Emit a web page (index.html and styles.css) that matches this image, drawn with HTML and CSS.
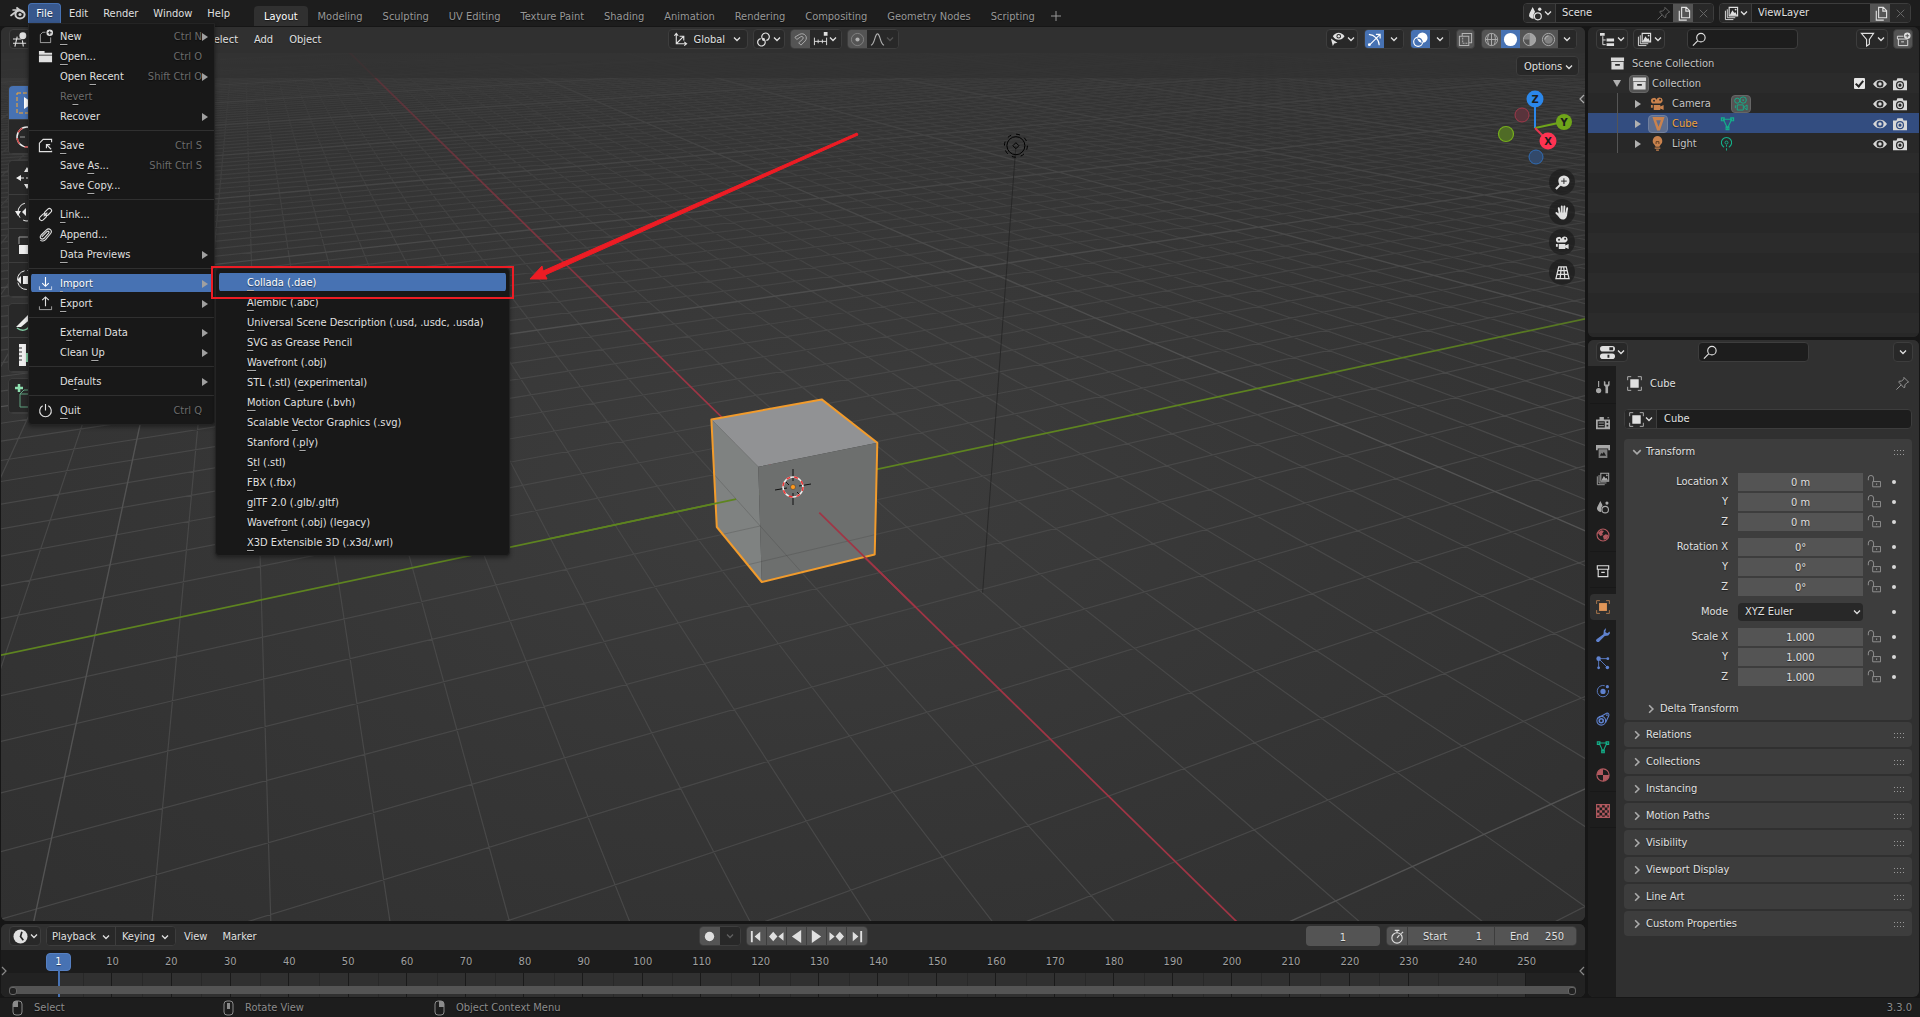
FILE: index.html
```html
<!DOCTYPE html>
<html lang="en">
<head>
<meta charset="utf-8">
<title>Blender</title>
<link rel="stylesheet" href="styles.css">
</head>
<body>
<svg class="sprite" aria-hidden="true">
  <defs>
    <symbol id="chev" viewBox="0 0 8 8"><path d="M1 2.5 4 5.5 7 2.5" fill="none" stroke="currentColor" stroke-width="1.3"/></symbol>
    <symbol id="blender" viewBox="0 0 16 16"><path d="M1 10.5 8 5H3M8.500 5 6.500 2.500 13 7.500M3 5h6" fill="none" stroke="currentColor" stroke-width="1.600" stroke-linecap="round"/><ellipse cx="10" cy="9.500" rx="4.600" ry="4" fill="none" stroke="currentColor" stroke-width="2"/><circle cx="10" cy="9.500" r="1.600" fill="currentColor"/></symbol>
    <symbol id="newfile" viewBox="0 0 16 16"><path d="M8 3.500H5L2.500 6v8.500h11V9" fill="none" stroke="currentColor" opacity=".7"/><circle cx="12.500" cy="4" r="3.500" fill="currentColor"/><path d="M12.500 2v4M10.500 4h4" stroke="#181818"/></symbol>
    <symbol id="folder" viewBox="0 0 16 16"><path d="M1 2h6v2h8v2H1zM1 7h14v7H1z" fill="currentColor"/></symbol>
    <symbol id="save" viewBox="0 0 16 16"><path d="M14.500 4.500v-3h-9l-4 4v9h13v-1M14 12 9 7M9 11V7h4" fill="none" stroke="currentColor" stroke-width="1.200"/></symbol>
    <symbol id="link" viewBox="0 0 16 16"><g fill="none" stroke="currentColor" stroke-width="1.200"><rect x="6.500" y="3" width="8.500" height="4.600" rx="2.300" transform="rotate(-45 10.700 5.300)"/><rect x="1" y="8.500" width="8.500" height="4.600" rx="2.300" transform="rotate(-45 5.300 10.700)"/><path d="m6 10 4-4"/></g></symbol>
    <symbol id="clip" viewBox="0 0 16 16"><path d="M4 10.500 9.500 5c1.500-1.300 3 .2 1.700 1.700L6.500 12c-2.500 2.300-5.500-.5-3.300-3.200L9 3c3-2.700 7 1 4.300 4.200L8 13.500c-1.500 1.600-4 1.800-5.500.5" fill="none" stroke="currentColor" stroke-width="1.200"/></symbol>
    <symbol id="import" viewBox="0 0 16 16"><path d="M8 1v10M4.500 7.500 8 11l3.500-3.500" fill="none" stroke="currentColor" stroke-width="1.200"/><path d="M1.500 11v3.500h13V11" fill="none" stroke="currentColor" opacity=".7"/></symbol>
    <symbol id="export" viewBox="0 0 16 16"><path d="M8 11V1M4.500 4.500 8 1l3.500 3.500" fill="none" stroke="currentColor" stroke-width="1.200"/><path d="M1.500 11v3.500h13V11" fill="none" stroke="currentColor" opacity=".7"/></symbol>
    <symbol id="power" viewBox="0 0 16 16"><path d="M5 3a6.200 6.200 0 1 0 6 0M8 1v7" fill="none" stroke="currentColor" stroke-width="1.200"/></symbol>
    <symbol id="scene" viewBox="0 0 16 16"><path d="M5 1 1.500 8a4 4 0 0 0 4.500 5.500V9l1.500-3z" fill="currentColor"/><circle cx="10.500" cy="11" r="3.700" fill="none" stroke="currentColor" stroke-width="1.300"/><circle cx="12.500" cy="3.500" r="1.800" fill="currentColor"/></symbol>
    <symbol id="pin" viewBox="0 0 16 16"><path d="M9.500 1.500 14.500 6.500l-1.500.5-2.500 2.500v2.500l-1 .5L4 6.500l.5-1H7l2.500-2.500zM6.500 9.500 1.500 14.500" fill="none" stroke="currentColor"/></symbol>
    <symbol id="copy" viewBox="0 0 16 16"><path d="M6 1.500h5L14.500 5v7.500H6zM10.500 1.500v4h4M3.500 5v10h8" fill="none" stroke="currentColor" stroke-width="1.200"/></symbol>
    <symbol id="close" viewBox="0 0 16 16"><path d="m4 4 8 8M12 4l-8 8" stroke="currentColor"/></symbol>
    <symbol id="layers" viewBox="0 0 16 16"><path d="M1.500 5v9.500H10M3.500 3.500V12.500H12" fill="none" stroke="currentColor"/><path d="M5.500 1.500h9v9h-9z" fill="none" stroke="currentColor" stroke-width="1.200"/><path d="M6 10 9 4.500l2 3 1-1L14 10z" fill="currentColor"/><circle cx="12.400" cy="3.800" r="1" fill="currentColor"/></symbol>
    <symbol id="tree" viewBox="0 0 16 16"><path d="M0 1h5v3H0zM7 7h8v3H7zM7 12h8v3H7z" fill="currentColor"/><path d="M3 4.500v9h3M3 8.500h3" fill="none" stroke="currentColor"/></symbol>
    <symbol id="search" viewBox="0 0 16 16"><circle cx="9.500" cy="6" r="4.500" fill="none" stroke="currentColor" stroke-width="1.200"/><path d="M6 9.500 1 14.500" stroke="currentColor" stroke-width="1.300"/></symbol>
    <symbol id="filter" viewBox="0 0 16 16"><path d="M1.500 1.500h13L10 8v5l-3 2V8z" fill="none" stroke="currentColor" stroke-width="1.200"/></symbol>
    <symbol id="newcol" viewBox="0 0 16 16"><path d="M8 4.500H1.500v3h11M2.500 7.500v7h10v-6M5.500 10.500h3" fill="none" stroke="currentColor"/><circle cx="12" cy="4" r="3.500" fill="currentColor"/><path d="M12 2v4M10 4h4" stroke="#545454"/></symbol>
    <symbol id="collection" viewBox="0 0 16 16"><path d="M1 1.500h14v4H1zM1.500 6.500h13v8h-13z" fill="currentColor"/><path d="M5.500 8.500h5v2h-5z" fill="#2a2a2a"/></symbol>
    <symbol id="box" viewBox="0 0 16 16"><path d="M1.500 2h13v4h-13zM2.500 6v8.500h11V6M6 9.500h4" fill="none" stroke="currentColor" stroke-width="1.300"/></symbol>
    <symbol id="moviecam" viewBox="0 0 16 16"><path fill-rule="evenodd" d="M4 2a3 3 0 1 0 0 6h7a3.300 3.300 0 1 0-4-4A3 3 0 0 0 4 2zm.300 2a1 1 0 1 1 0 2 1 1 0 0 1 0-2zm6.500-1a1 1 0 1 1 0 2 1 1 0 0 1 0-2zM4 9.500h7v1.800l3.500-1.800v5.500L11 13.200V15H4zM1 9.500h2v3H1z" fill="currentColor"/></symbol>
    <symbol id="moviecamo" viewBox="0 0 16 16"><circle cx="4.500" cy="5" r="2.700" fill="none" stroke="currentColor"/><circle cx="10.800" cy="4.300" r="3.400" fill="none" stroke="currentColor"/><circle cx="10.800" cy="4.300" r=".9" fill="currentColor"/><path d="M4.500 9.500h6.500v5.500H4.500zM11.500 12l3.500-2.500v5.500zM2.500 10v3" fill="none" stroke="currentColor"/></symbol>
    <symbol id="mesh" viewBox="0 0 16 16"><path d="M3.500 3.500h9L8 13zM1.500 2h3v3h-3zM11.500 2h3v3h-3zM6.500 11.500h3v3h-3z" fill="none" stroke="currentColor" stroke-width="1.200"/></symbol>
    <symbol id="tri" viewBox="0 0 16 16"><path fill-rule="evenodd" d="M1.500 1h13L9.500 15.500h-3zM5.500 4.500l2.500 7 2.500-7z" fill="currentColor"/></symbol>
    <symbol id="bulb" viewBox="0 0 16 16"><path d="M8 0a5.300 5.300 0 0 0-3 9.500L6 11.500h4l1-2A5.300 5.300 0 0 0 8 0z" fill="currentColor"/><path d="M6.500 8.500V6h3v2.500" fill="none" stroke="#5a3a20"/><path d="M5 13h6M6.500 15h3" stroke="currentColor" stroke-width="1.300"/></symbol>
    <symbol id="lightdata" viewBox="0 0 16 16"><path d="M5.500 12a5.500 5.500 0 1 1 5 0" fill="none" stroke="currentColor" stroke-width="1.200"/><circle cx="8" cy="7" r="1.600" fill="none" stroke="currentColor"/><path d="M8 9.500v2M8 13v2.500" stroke="currentColor"/></symbol>
    <symbol id="eye" viewBox="0 0 16 16"><path fill-rule="evenodd" d="M0 8c4-6.500 12-6.500 16 0-4 6.500-12 6.500-16 0zm8-4a4 4 0 1 0 0 8 4 4 0 0 0 0-8z" fill="currentColor"/><circle cx="8" cy="8" r="2" fill="currentColor"/></symbol>
    <symbol id="photo" viewBox="0 0 16 16"><path fill-rule="evenodd" d="M0 4h4l1-2.500h6L12 4h4v11H0zm8 .7a4.600 4.600 0 1 0 0 9.200 4.600 4.600 0 0 0 0-9.200z" fill="currentColor"/><circle cx="8" cy="9.300" r="2.500" fill="none" stroke="currentColor" stroke-width="1.400"/></symbol>
    <symbol id="axes" viewBox="0 0 16 16"><path d="M3.500 13V2M1.500 4l2-2.500L5.500 4M3 12.500h11M12 10.500l2.500 2-2.500 2M4 12 11 5M7 4.500h4.500V9" fill="none" stroke="currentColor" stroke-width="1.200"/></symbol>
    <symbol id="pivot" viewBox="0 0 16 16"><g fill="none" stroke="currentColor" stroke-width="1.300"><path d="M7 7.500A4 4 0 1 1 11 9"/><path d="M9 8.500A4 4 0 1 1 5 7"/></g><circle cx="8" cy="8" r="1.500" fill="currentColor"/></symbol>
    <symbol id="magnet" viewBox="0 0 16 16"><path d="M2 5.500 7 2.500c5-2.500 9.500 3 6 7L8.500 14 6 11.500l4.500-4c1.200-1.700-.5-3.500-2.200-2.500L4 8z" fill="none" stroke="currentColor"/></symbol>
    <symbol id="increments" viewBox="0 0 16 16"><path d="M1.500 6v8M14.500 6v8M5.500 8v4M10 8v4M1.500 10h13" stroke="currentColor"/><path d="M11.500 0h4v4h-4z" fill="currentColor"/></symbol>
    <symbol id="prop" viewBox="0 0 16 16"><circle cx="8" cy="8" r="6.500" fill="none" stroke="currentColor" opacity=".5"/><circle cx="8" cy="8" r="2.200" fill="currentColor"/></symbol>
    <symbol id="falloff" viewBox="0 0 16 16"><path d="M1 14c4 0 4-12 7-12s3 12 7 12" fill="none" stroke="currentColor" stroke-width="1.200"/></symbol>
    <symbol id="seltypes" viewBox="0 0 16 16"><path fill-rule="evenodd" d="M3 4.500c3-5 9.500-5 12.500 0-3 5-9.500 5-12.500 0zM9.300 2a2.500 2.500 0 1 0 0 5 2.500 2.500 0 0 0 0-5z" fill="currentColor"/><circle cx="9.300" cy="4.500" r="1.300" fill="currentColor"/><path d="m1 7 7 4.500-3.500.7L3 15z" fill="currentColor"/></symbol>
    <symbol id="gizmo" viewBox="0 0 16 16"><path d="M2 2.500C8 3 13 8 13 14M2 14.500 14 2.500M9.500 2.500H14V7" fill="none" stroke="currentColor" stroke-width="1.200"/><circle cx="2.500" cy="13.500" r="1.500" fill="currentColor"/></symbol>
    <symbol id="overlay" viewBox="0 0 16 16"><circle cx="10" cy="6" r="5.500" fill="currentColor"/><circle cx="5.500" cy="10.500" r="4.800" fill="none" stroke="currentColor" stroke-width="1.200"/><path d="M5 6.500A5 5 0 0 1 9.800 11" fill="none" stroke="#4772b3" stroke-width="1.400"/></symbol>
    <symbol id="xray" viewBox="0 0 16 16"><path d="M1.500 4.500h10v10h-10zM4.500 4V1.500h10v10H12" fill="none" stroke="currentColor" stroke-width="1.100"/><path d="M5 6v6h5" fill="none" stroke="currentColor" stroke-dasharray="2 1"/></symbol>
    <symbol id="wire" viewBox="0 0 16 16"><g fill="none" stroke="currentColor"><circle cx="8" cy="8" r="6.500"/><path d="M8 1.500v13M1.500 8h13M5 2.500c-2 4-1 8 0 11M11 2.500c2 4 1 8 0 11"/></g></symbol>
    <symbol id="solid" viewBox="0 0 16 16"><circle cx="8" cy="8" r="7" fill="currentColor"/></symbol>
    <symbol id="matprev" viewBox="0 0 16 16"><circle cx="8" cy="8" r="6.500" fill="none" stroke="currentColor"/><path d="M8 8V1.500A6.500 6.500 0 0 0 1.500 8z" fill="currentColor" opacity=".5"/><path d="M8 8h6.500A6.500 6.500 0 0 0 8 1.500zM8 8h6.500A6.500 6.500 0 0 1 8 14.500z" fill="currentColor" opacity=".85"/></symbol>
    <symbol id="rendered" viewBox="0 0 16 16"><circle cx="8" cy="8" r="6.500" fill="none" stroke="currentColor"/><circle cx="8" cy="8" r="4.500" fill="currentColor" opacity=".5"/><path d="M4 8a5 5 0 0 1 4-4" fill="none" stroke="currentColor" stroke-width="1.300"/></symbol>
    <symbol id="view3d" viewBox="0 0 16 16"><path d="M0 7.500h9M0 12h14M4.500 5 2 15.500M10 9l1 6.500" fill="none" stroke="currentColor" stroke-width="1.200"/><circle cx="10.500" cy="4" r="3.700" fill="currentColor"/></symbol>
    <symbol id="clock" viewBox="0 0 16 16"><circle cx="8" cy="8" r="7.500" fill="currentColor"/><path d="M9.500 3 8 8l3 4" fill="none" stroke="#252525" stroke-width="1.800"/></symbol>
    <symbol id="propicon" viewBox="0 0 16 16"><rect x="0" y="1" width="16" height="6" rx="3" fill="currentColor"/><rect x="0" y="9" width="16" height="6" rx="3" fill="currentColor"/><path d="M10 2.500h4v3h-4zM8 10.500h2v3H8z" fill="#282828"/></symbol>
    <symbol id="tools" viewBox="0 0 16 16"><path d="M3 1v7" stroke="currentColor" stroke-width="1.300"/><circle cx="3" cy="12" r="3" fill="currentColor"/><path d="M9 1v5l1.800 1.800V15h3V7.800L15.500 6V1L13.800 2v3h-3V2z" fill="currentColor"/></symbol>
    <symbol id="render" viewBox="0 0 16 16"><path fill-rule="evenodd" d="M0 4h4V1h5v3h7v11H0zm2 2v7h8V6zm10 0v2h2V6zm0 4v2h2v-2z" fill="currentColor"/><path d="M3 8h6M3 11h6M13 2h2" stroke="currentColor"/></symbol>
    <symbol id="output" viewBox="0 0 16 16"><path d="M0 1h16v6h-2V5H2v2H0z" fill="currentColor"/><path fill-rule="evenodd" d="M3 6h10v10H3zm1.500 7.500h7L9 9l-2 2.500L6 10z" fill="currentColor" opacity=".7"/></symbol>
    <symbol id="world" viewBox="0 0 16 16"><circle cx="8" cy="8" r="6.800" fill="none" stroke="currentColor" stroke-width="1.300"/><path d="M2 5.500 6 2.500l3 1-2 3 1 1.500-3 1zM8 9l3-2 3 1-1 4-4 1.500z" fill="currentColor"/></symbol>
    <symbol id="object" viewBox="0 0 16 16"><path d="M3.500 3.500h9v9h-9z" fill="currentColor"/><path d="M.7 4.500V.7h3.800M11.500.7h3.800v3.800M15.300 11.500v3.800h-3.800M4.500 15.300H.7v-3.800" fill="none" stroke="currentColor" opacity=".75"/></symbol>
    <symbol id="wrench" viewBox="0 0 16 16"><path d="M11.500 0 9 2.500 8.500 7 1 12.500a2 2 0 1 0 3 2.500L10 9l4-.5L16 6l-.5-2L13 6l-2.500-1.500L11 3z" fill="currentColor"/></symbol>
    <symbol id="particles" viewBox="0 0 16 16"><path d="M3 3h10M3 3v10M3 3l10 10" stroke="currentColor"/><circle cx="3" cy="3" r="2.600" fill="currentColor"/><circle cx="13.500" cy="3" r="1.600" fill="currentColor"/><circle cx="3" cy="13.500" r="1.600" fill="currentColor"/><circle cx="13" cy="13" r="2" fill="currentColor"/></symbol>
    <symbol id="physics" viewBox="0 0 16 16"><path d="M10 2A6.500 6.500 0 1 0 14.300 7" fill="none" stroke="currentColor"/><circle cx="8" cy="8.500" r="3" fill="currentColor"/><circle cx="13" cy="3" r="1.800" fill="currentColor"/></symbol>
    <symbol id="constraint" viewBox="0 0 16 16"><path d="M1.500 7.500 12 1.500c2-.7 3.500 1 2.500 3L11 12" fill="none" stroke="currentColor" stroke-width="1.200"/><circle cx="6" cy="10" r="5" fill="none" stroke="currentColor" stroke-width="1.200"/><circle cx="6" cy="10" r="2.300" fill="none" stroke="currentColor" stroke-width="1.800"/><circle cx="12.500" cy="3.500" r="1" fill="currentColor"/></symbol>
    <symbol id="material" viewBox="0 0 16 16"><circle cx="8" cy="8" r="7" fill="none" stroke="currentColor" stroke-width="1.300"/><path d="M8 8V1A7 7 0 0 0 1 8zM8 8h7a7 7 0 0 1-7 7z" fill="currentColor"/></symbol>
    <symbol id="texture" viewBox="0 0 16 16"><path d="M.7.700h14.600v14.600H.7z" fill="none" stroke="currentColor" stroke-width="1.300"/><path d="M4 1h3v3H4zM10 1h3v3h-3zM1 4h3v3H1zM7 4h3v3H7zM13 4h2v3h-2zM4 7h3v3H4zM10 7h3v3h-3zM1 10h3v3H1zM7 10h3v3H7zM13 10h2v3h-2zM4 13h3v2H4zM10 13h3v2h-3z" fill="currentColor"/></symbol>
    <symbol id="unlock" viewBox="0 0 16 16"><path d="M1.500 6V3.500a3 3 0 0 1 6 0V7M6.500 7.500h9v6h-9zM11 9.500v2" fill="none" stroke="currentColor"/></symbol>
    <symbol id="grip" viewBox="0 0 11 5"><path d="M0 .5h11M0 4.500h11" stroke="currentColor" stroke-dasharray="1 2"/></symbol>
    <symbol id="record" viewBox="0 0 16 16"><circle cx="8" cy="8" r="5" fill="currentColor"/></symbol>
    <symbol id="first" viewBox="0 0 16 16"><path d="M2 2h2v12H2zM12 3v10L6 8z" fill="currentColor"/></symbol>
    <symbol id="prevkey" viewBox="0 0 16 16"><path d="m0 8 4.500-5L9 8l-4.500 5zM15.500 3.500v9L10 8z" fill="currentColor"/></symbol>
    <symbol id="back" viewBox="0 0 16 16"><path d="M13 1v14L3 8z" fill="currentColor"/></symbol>
    <symbol id="stopwatch" viewBox="0 0 16 16"><circle cx="7.500" cy="9.500" r="5.500" fill="none" stroke="currentColor" stroke-width="1.200"/><path d="M7.500 4V1.500M5 1.500h5M12 5l2-2M7.500 9.500 10 6.500" fill="none" stroke="currentColor" stroke-width="1.200"/></symbol>
    <symbol id="mouseL" viewBox="0 0 11 16"><rect x="1" y="1" width="9" height="14" rx="3" fill="none" stroke="currentColor"/><path d="M1 7V3l2-2h3v6z" fill="currentColor"/></symbol>
    <symbol id="mouseM" viewBox="0 0 11 16"><rect x="1" y="1" width="9" height="14" rx="3" fill="none" stroke="currentColor"/><path d="M4 3h3v6H4z" fill="currentColor"/></symbol>
    <symbol id="mouseR" viewBox="0 0 11 16"><rect x="1" y="1" width="9" height="14" rx="3" fill="none" stroke="currentColor"/><path d="M5 7V1h3l2 2v4z" fill="currentColor"/></symbol>
    <symbol id="zoomin" viewBox="0 0 16 16"><circle cx="9.500" cy="6.500" r="6" fill="currentColor"/><path d="M6 10 1 15" stroke="currentColor" stroke-width="2.200"/><path d="M9.500 3.500v6M6.500 6.500h6" stroke="#222"/></symbol>
    <symbol id="hand" viewBox="0 0 16 16"><g stroke="currentColor" stroke-width="2" stroke-linecap="round"><path d="M5 9 4 3.500M7.200 8V1.500M9.700 8l.3-6.500M12 9l1-5.500M5 12 1.500 8.500"/></g><path d="M4 8h9c.5 4-1.500 7.500-4.500 7.500S4 13 3 10z" fill="currentColor"/></symbol>
    <symbol id="perspgrid" viewBox="0 0 16 16"><path d="M4 2h8l3 12.500H1zM3.200 6h9.600M2.200 10h11.600M6.700 2 5.500 14.500M9.300 2l1.200 12.500" fill="none" stroke="currentColor" stroke-width="1.300"/></symbol>
    <symbol id="t-select" viewBox="0 0 24 24"><path d="M2 2h20v20H2z" fill="none" stroke="#ffa82a" stroke-dasharray="4 2"/><path d="M9 6v12l9-6z" fill="#fff"/></symbol>
    <symbol id="t-cursor" viewBox="0 0 24 24"><circle cx="12" cy="12" r="10" fill="none" stroke="#eee" stroke-width="1.500"/><circle cx="12" cy="12" r="10" fill="none" stroke="#c44" stroke-width="1.500" stroke-dasharray="6 6"/><path d="M5 12h5" stroke="#999"/></symbol>
    <symbol id="t-move" viewBox="0 0 24 24"><path d="M1 12l5-3v6zM12 1l3 5H9zM12 23l3-5H9zM23 12l-5-3v6z" fill="#eee"/><path d="M6 12h12" stroke="#eee" stroke-dasharray="3 2"/></symbol>
    <symbol id="t-rotate" viewBox="0 0 24 24"><circle cx="12" cy="12" r="9" fill="none" stroke="#eee" stroke-dasharray="18 4"/><path d="M0 11h6l-3 5zM7 12l4-4v8z" fill="#eee"/></symbol>
    <symbol id="t-scale" viewBox="0 0 24 24"><path d="M4 10V3h16v16h-6" fill="none" stroke="#999"/><path d="M4 11h9v9H4z" fill="#eee"/></symbol>
    <symbol id="t-transform" viewBox="0 0 24 24"><circle cx="12" cy="12" r="9.500" fill="none" stroke="#eee" stroke-dasharray="12 3"/><path d="M8 8h8v8H8zM2 12l4-4v8z" fill="#eee"/></symbol>
    <symbol id="t-annotate" viewBox="0 0 24 24"><path d="m1 18 13-13 4 3L6 18z" fill="#eee"/><path d="M2 19c5 4 12 2 12-3" fill="none" stroke="#7fc8a0" stroke-width="1.500"/></symbol>
    <symbol id="t-measure" viewBox="0 0 24 24"><path d="M4 1h7v22H4z" fill="#eee"/><path d="M4 5h3M4 9h3M4 13h3M4 17h3" stroke="#333"/><path d="M11 10h6v9h-6z" fill="#7fc8a0"/></symbol>
    <symbol id="t-add" viewBox="0 0 24 24"><path d="M4 0v8M0 4h8" stroke="#8ee0b0" stroke-width="2.500"/><path d="M5 10h14v13H5zM5 10l4-4h12" fill="none" stroke="#5fa07f"/></symbol>
  </defs>
</svg>

<header class="topbar">
  <svg class="ic logo"><use href="#blender"/></svg>
  <nav class="menubar">
    <div class="menu-root">
      <button class="menu-btn open">File</button>
      <ul class="popup file-menu">
        <li><svg class="ic"><use href="#newfile"/></svg><span><u>N</u>ew</span><kbd>Ctrl N</kbd><i class="sub"></i></li>
        <li><svg class="ic"><use href="#folder"/></svg><span><u>O</u>pen...</span><kbd>Ctrl O</kbd></li>
        <li><span>Open <u>R</u>ecent</span><kbd>Shift Ctrl O</kbd><i class="sub"></i></li>
        <li class="off"><span>Re<u>v</u>ert</span></li>
        <li><span>Recover</span><i class="sub"></i></li>
        <li class="sep"></li>
        <li><svg class="ic"><use href="#save"/></svg><span><u>S</u>ave</span><kbd>Ctrl S</kbd></li>
        <li><span>Save <u>A</u>s...</span><kbd>Shift Ctrl S</kbd></li>
        <li><span>Save <u>C</u>opy...</span></li>
        <li class="sep"></li>
        <li><svg class="ic"><use href="#link"/></svg><span><u>L</u>ink...</span></li>
        <li><svg class="ic"><use href="#clip"/></svg><span>A<u>p</u>pend...</span></li>
        <li><span><u>D</u>ata Previews</span><i class="sub"></i></li>
        <li class="sep"></li>
        <li class="hot"><svg class="ic"><use href="#import"/></svg><span><u>I</u>mport</span><i class="sub"></i>
          <ul class="popup import-menu">
            <li class="hot"><span><u>C</u>ollada (.dae)</span></li>
            <li><span><u>A</u>lembic (.abc)</span></li>
            <li><span><u>U</u>niversal Scene Description (.usd, .usdc, .usda)</span></li>
            <li><span><u>S</u>VG as Grease Pencil</span></li>
            <li><span><u>W</u>avefront (.obj)</span></li>
            <li><span>STL (.stl) (<u>e</u>xperimental)</span></li>
            <li><span><u>M</u>otion Capture (.bvh)</span></li>
            <li><span>Scalable <u>V</u>ector Graphics (.svg)</span></li>
            <li><span>Stanford (.<u>p</u>ly)</span></li>
            <li><span>S<u>t</u>l (.stl)</span></li>
            <li><span><u>F</u>BX (.fbx)</span></li>
            <li><span><u>g</u>lTF 2.0 (.glb/.gltf)</span></li>
            <li><span>Wavefr<u>o</u>nt (.obj) (legacy)</span></li>
            <li><span><u>X</u>3D Extensible 3D (.x3d/.wrl)</span></li>
          </ul>
        </li>
        <li><svg class="ic"><use href="#export"/></svg><span><u>E</u>xport</span><i class="sub"></i></li>
        <li class="sep"></li>
        <li><span>E<u>x</u>ternal Data</span><i class="sub"></i></li>
        <li><span>Clean <u>U</u>p</span><i class="sub"></i></li>
        <li class="sep"></li>
        <li><span>De<u>f</u>aults</span><i class="sub"></i></li>
        <li class="sep"></li>
        <li><svg class="ic"><use href="#power"/></svg><span><u>Q</u>uit</span><kbd>Ctrl Q</kbd></li>
      </ul>
    </div>
    <button class="menu-btn">Edit</button>
    <button class="menu-btn">Render</button>
    <button class="menu-btn">Window</button>
    <button class="menu-btn">Help</button>
  </nav>
  <nav class="tabs">
    <button class="tab on">Layout</button><button class="tab">Modeling</button><button class="tab">Sculpting</button><button class="tab">UV Editing</button><button class="tab">Texture Paint</button><button class="tab">Shading</button><button class="tab">Animation</button><button class="tab">Rendering</button><button class="tab">Compositing</button><button class="tab">Geometry Nodes</button><button class="tab">Scripting</button><button class="tab add" aria-label="Add workspace"><svg viewBox="0 0 10 10"><path d="M5 0v10M0 5h10" stroke="currentColor"/></svg></button>
  </nav>
  <div class="datablock">
    <button class="cell dd" aria-label="Browse scene"><svg class="ic"><use href="#scene"/></svg><svg class="ch"><use href="#chev"/></svg></button>
    <input class="name" aria-label="Scene name" value="Scene">
    <button class="cell bare dim" aria-label="Pin scene"><svg class="ic"><use href="#pin"/></svg></button>
    <button class="cell lit" aria-label="New scene"><svg class="ic"><use href="#copy"/></svg></button>
    <button class="cell dim" aria-label="Delete scene"><svg class="ic"><use href="#close"/></svg></button>
  </div>
  <div class="datablock">
    <button class="cell dd" aria-label="Browse view layer"><svg class="ic"><use href="#layers"/></svg><svg class="ch"><use href="#chev"/></svg></button>
    <input class="name wide" aria-label="View layer name" value="ViewLayer">
    <button class="cell lit" aria-label="New view layer"><svg class="ic"><use href="#copy"/></svg></button>
    <button class="cell dim" aria-label="Delete view layer"><svg class="ic"><use href="#close"/></svg></button>
  </div>
</header>

<main class="workspace">
  <div class="left">
    <section class="editor viewport">
      <div class="bar">
        <div class="bar-side">
          <button class="box dd" aria-label="Editor type"><svg class="ic"><use href="#view3d"/></svg><svg class="ch"><use href="#chev"/></svg></button>
          <button class="box mode" aria-label="Object Mode"><svg class="ic"><use href="#object"/></svg></button>
          <button class="plain">View</button><button class="plain">Select</button><button class="plain">Add</button><button class="plain">Object</button>
        </div>
        <div class="bar-mid">
          <label class="box orient"><svg class="ic"><use href="#axes"/></svg><select aria-label="Transform orientation"><option>Global</option></select><svg class="ch"><use href="#chev"/></svg></label>
          <button class="box dd" aria-label="Pivot point"><svg class="ic"><use href="#pivot"/></svg><svg class="ch"><use href="#chev"/></svg></button>
          <div class="box group"><button class="cell lit soft" aria-label="Snap"><svg class="ic"><use href="#magnet"/></svg></button><button class="cell dd" aria-label="Snap to"><svg class="ic"><use href="#increments"/></svg><svg class="ch"><use href="#chev"/></svg></button></div>
          <div class="box group"><button class="cell lit soft" aria-label="Proportional editing"><svg class="ic"><use href="#prop"/></svg></button><button class="cell dd soft" aria-label="Falloff"><svg class="ic"><use href="#falloff"/></svg><svg class="ch faint"><use href="#chev"/></svg></button></div>
        </div>
        <div class="bar-side end">
          <button class="box dd" aria-label="Object types"><svg class="ic"><use href="#seltypes"/></svg><svg class="ch"><use href="#chev"/></svg></button>
          <div class="box group"><button class="cell blue" aria-label="Gizmos"><svg class="ic"><use href="#gizmo"/></svg></button><button class="cell" aria-label="Gizmo options"><svg class="ch"><use href="#chev"/></svg></button></div>
          <div class="box group"><button class="cell blue" aria-label="Overlays"><svg class="ic"><use href="#overlay"/></svg></button><button class="cell" aria-label="Overlay options"><svg class="ch"><use href="#chev"/></svg></button></div>
          <button class="box group xray" aria-label="X-ray"><svg class="ic"><use href="#xray"/></svg></button>
          <div class="box group shading"><button class="cell lit soft" aria-label="Wireframe"><svg class="ic"><use href="#wire"/></svg></button><button class="cell blue" aria-label="Solid"><svg class="ic"><use href="#solid"/></svg></button><button class="cell lit soft" aria-label="Material preview"><svg class="ic"><use href="#matprev"/></svg></button><button class="cell lit soft" aria-label="Rendered"><svg class="ic"><use href="#rendered"/></svg></button><button class="cell" aria-label="Shading options"><svg class="ch"><use href="#chev"/></svg></button></div>
        </div>
      </div>
      <div class="stage">
        <svg class="scene" id="scene3d">
          <defs>
            <linearGradient id="fade" x1="0" y1="0" x2="0" y2="1"><stop offset="0" stop-color="#fff" stop-opacity=".3"/><stop offset=".12" stop-color="#fff" stop-opacity=".5"/><stop offset=".4" stop-color="#fff"/><stop offset="1" stop-color="#fff"/></linearGradient>
            <mask id="far" maskUnits="userSpaceOnUse" x="-2000" y="-434" width="4000" height="868"><rect x="-2000" y="-434" width="4000" height="868" fill="url(#fade)"/></mask>
            <clipPath id="cubeclip"><path id="silclip"/></clipPath>
          </defs>
          <g mask="url(#far)">
            <path id="minor" class="minor"/><path id="major" class="major"/>
            <path id="axisx" class="axis-x"/><path id="axisy" class="axis-y"/>
          </g>
          <path id="ftop" fill="#919294"/><path id="fleft" fill="#7f8281"/><path id="fright" fill="#6d6f6e"/>
          <g clip-path="url(#cubeclip)"><path id="front" class="ghost"/></g>
          <path id="sil" class="outline"/>
          <path id="frontx" class="axis-x"/><path id="fronty" class="axis-y"/>
          <path id="drop" class="drop"/>
          <g id="lamp" fill="none" stroke="#000"><circle r="9"/><circle r="11.500" stroke-dasharray="4 5"/><path d="m0-3 3 3-3 3-3-3z"/></g>
          <g fill="none"><path d="M0-18V-6M0 6v12M-18 3l12-2M6-1l12-2M-7-5l3 3M4 5l3 3" stroke="#111"/><circle r="10" stroke="#eee" stroke-width="1.500"/><circle r="10" stroke="#e33" stroke-width="1.500" stroke-dasharray="4 4"/><circle r="2.500" fill="#ff9a1f" stroke="#333" stroke-width=".5"/></g>
        </svg>
        <div class="tool-strip"><button class="box options">Options<svg class="ch"><use href="#chev"/></svg></button></div>
        <div class="toolbar">
          <div class="tg"><button class="on" aria-label="Select box"><svg><use href="#t-select"/></svg></button><button aria-label="Cursor"><svg><use href="#t-cursor"/></svg></button></div>
          <div class="tg"><button aria-label="Move"><svg><use href="#t-move"/></svg></button><button aria-label="Rotate"><svg><use href="#t-rotate"/></svg></button><button aria-label="Scale"><svg><use href="#t-scale"/></svg></button><button aria-label="Transform"><svg><use href="#t-transform"/></svg></button></div>
          <div class="tg"><button aria-label="Annotate"><svg><use href="#t-annotate"/></svg></button><button aria-label="Measure"><svg><use href="#t-measure"/></svg></button></div>
          <div class="tg"><button aria-label="Add cube"><svg><use href="#t-add"/></svg></button></div>
        </div>
        <svg class="fold" viewBox="0 0 6 18"><path d="M5 5 1 9l4 4" fill="none" stroke="#aaa" stroke-width="1.200"/></svg>
        <div class="navigate">
          <svg class="ball" viewBox="0 0 84 84">
            <g stroke-width="2"><path d="M42 40V12" stroke="#2b87ea"/><path d="m42 40 28-6" stroke="#6fa51a"/><path d="m42 40 13 13" stroke="#e6364f"/></g>
            <circle cx="29" cy="27" r="7" fill="#59333b" stroke="#a0394b"/><circle cx="13" cy="46" r="7.500" fill="#4f6b26" stroke="#76ae1c" stroke-width="1.200"/><circle cx="43" cy="69" r="7" fill="#32496a" stroke="#2f6cb5"/>
            <circle cx="42" cy="11" r="8.500" fill="#2b87ea"/><circle cx="71" cy="34" r="8" fill="#6fa51a"/><circle cx="55" cy="53" r="8.500" fill="#ff3352"/>
            <g class="axis-label"><text x="42" y="15">Z</text><text x="71" y="38">Y</text><text x="55" y="57">X</text></g>
          </svg>
          <button aria-label="Zoom"><svg class="ic"><use href="#zoomin"/></svg></button>
          <button aria-label="Pan"><svg class="ic"><use href="#hand"/></svg></button>
          <button aria-label="Camera view"><svg class="ic"><use href="#moviecam"/></svg></button>
          <button aria-label="Toggle perspective"><svg class="ic"><use href="#perspgrid"/></svg></button>
        </div>
      </div>
    </section>

    <section class="editor timeline">
      <div class="bar">
        <div class="bar-side">
          <button class="box dd" aria-label="Editor type"><svg class="ic"><use href="#clock"/></svg><svg class="ch"><use href="#chev"/></svg></button>
          <div class="box group text"><button class="cell playback">Playback<svg class="ch"><use href="#chev"/></svg></button><button class="cell keying">Keying<svg class="ch"><use href="#chev"/></svg></button></div>
          <button class="plain">View</button><button class="plain">Marker</button>
        </div>
        <div class="bar-mid">
          <div class="box group"><button class="cell lit" aria-label="Auto keying"><svg class="ic"><use href="#record"/></svg></button><button class="cell" aria-label="Auto keying options"><svg class="ch faint"><use href="#chev"/></svg></button></div>
          <div class="box group player"><button class="cell lit" aria-label="First frame"><svg class="ic"><use href="#first"/></svg></button><button class="cell lit" aria-label="Previous keyframe"><svg class="ic"><use href="#prevkey"/></svg></button><button class="cell lit" aria-label="Play backwards"><svg class="ic"><use href="#back"/></svg></button><button class="cell lit" aria-label="Play"><svg class="ic flip"><use href="#back"/></svg></button><button class="cell lit" aria-label="Next keyframe"><svg class="ic flip"><use href="#prevkey"/></svg></button><button class="cell lit" aria-label="Last frame"><svg class="ic flip"><use href="#first"/></svg></button></div>
        </div>
        <div class="bar-side end">
          <input class="frame" aria-label="Current frame" value="1">
          <div class="box group range"><button class="cell lit" aria-label="Preview range"><svg class="ic"><use href="#stopwatch"/></svg></button><label class="cell lit num">Start<input value="1"></label><label class="cell lit num">End<input value="250"></label></div>
        </div>
      </div>
      <div class="ruler"><div class="frames" id="frames"></div><div class="playhead">1</div><svg class="edge l" viewBox="0 0 6 18"><path d="m1 5 4 4-4 4" fill="none" stroke="#888" stroke-width="1.200"/></svg><svg class="edge r" viewBox="0 0 6 18"><path d="M5 5 1 9l4 4" fill="none" stroke="#888" stroke-width="1.200"/></svg><div class="scroll"></div></div>
    </section>
  </div>

  <div class="right">
    <section class="editor outliner">
      <div class="bar">
        <button class="box dd" aria-label="Editor type"><svg class="ic"><use href="#tree"/></svg><svg class="ch"><use href="#chev"/></svg></button>
        <button class="box dd" aria-label="Display mode"><svg class="ic"><use href="#layers"/></svg><svg class="ch"><use href="#chev"/></svg></button>
        <label class="box search"><svg class="ic"><use href="#search"/></svg><input aria-label="Filter outliner"></label>
        <button class="box dd" aria-label="Filter"><svg class="ic"><use href="#filter"/></svg><svg class="ch"><use href="#chev"/></svg></button>
        <button class="box square lit" aria-label="New collection"><svg class="ic"><use href="#newcol"/></svg></button>
      </div>
      <ul class="rows">
        <li class="d0"><svg class="ic"><use href="#collection"/></svg><span>Scene Collection</span></li>
        <li class="d1"><i class="down"></i><span class="halo"><svg class="ic"><use href="#collection"/></svg></span><span class="grow">Collection</span><input type="checkbox" checked aria-label="Enable collection"><svg class="ic"><use href="#eye"/></svg><svg class="ic"><use href="#photo"/></svg></li>
        <li class="d2"><i class="sub"></i><svg class="ic orange"><use href="#moviecam"/></svg><span>Camera</span><span class="halo cam"><svg class="ic teal"><use href="#moviecamo"/></svg></span><b class="grow"></b><svg class="ic"><use href="#eye"/></svg><svg class="ic"><use href="#photo"/></svg></li>
        <li class="d2 sel"><i class="sub"></i><span class="halo"><svg class="ic orange"><use href="#tri"/></svg></span><span>Cube</span><svg class="ic teal data"><use href="#mesh"/></svg><b class="grow"></b><svg class="ic"><use href="#eye"/></svg><svg class="ic"><use href="#photo"/></svg></li>
        <li class="d2"><i class="sub"></i><svg class="ic orange"><use href="#bulb"/></svg><span>Light</span><svg class="ic teal data"><use href="#lightdata"/></svg><b class="grow"></b><svg class="ic"><use href="#eye"/></svg><svg class="ic"><use href="#photo"/></svg></li>
      </ul>
    </section>

    <section class="editor props">
      <div class="bar">
        <button class="box dd" aria-label="Editor type"><svg class="ic"><use href="#propicon"/></svg><svg class="ch"><use href="#chev"/></svg></button>
        <label class="box search"><svg class="ic"><use href="#search"/></svg><input aria-label="Search properties"></label>
        <button class="box square" aria-label="Options"><svg class="ch"><use href="#chev"/></svg></button>
      </div>
      <div class="props-body">
        <nav class="ptabs">
          <div><button aria-label="Tool"><svg class="ic"><use href="#tools"/></svg></button></div>
          <div><button aria-label="Render"><svg class="ic"><use href="#render"/></svg></button><button aria-label="Output"><svg class="ic"><use href="#output"/></svg></button><button aria-label="View layer"><svg class="ic"><use href="#layers"/></svg></button><button aria-label="Scene"><svg class="ic"><use href="#scene"/></svg></button><button aria-label="World" class="red"><svg class="ic"><use href="#world"/></svg></button></div>
          <div><button aria-label="Collection" class="white"><svg class="ic"><use href="#box"/></svg></button></div>
          <div><button aria-label="Object" class="on"><svg class="ic"><use href="#object"/></svg></button><button aria-label="Modifiers" class="bluei"><svg class="ic"><use href="#wrench"/></svg></button><button aria-label="Particles" class="bluei"><svg class="ic"><use href="#particles"/></svg></button><button aria-label="Physics" class="bluei"><svg class="ic"><use href="#physics"/></svg></button><button aria-label="Constraints" class="bluei"><svg class="ic"><use href="#constraint"/></svg></button><button aria-label="Data" class="teal"><svg class="ic"><use href="#mesh"/></svg></button><button aria-label="Material" class="red"><svg class="ic"><use href="#material"/></svg></button></div>
          <div><button aria-label="Texture" class="red"><svg class="ic"><use href="#texture"/></svg></button></div>
        </nav>
        <div class="pmain">
          <div class="crumb"><svg class="ic"><use href="#object"/></svg><span class="grow">Cube</span><svg class="ic pin"><use href="#pin"/></svg></div>
          <div class="idblock"><button class="cell dd" aria-label="Browse object"><svg class="ic"><use href="#object"/></svg><svg class="ch"><use href="#chev"/></svg></button><input aria-label="Object name" value="Cube"></div>
          <div class="panel open">
            <h2><svg class="ch big"><use href="#chev"/></svg>Transform<svg class="grip"><use href="#grip"/></svg></h2>
            <div class="fields" id="fields">
              <div class="fgroup"><label>Location X<input value="0 m"></label><label>Y<input value="0 m"></label><label>Z<input value="0 m"></label></div>
              <div class="fgroup"><label>Rotation X<input value="0°"></label><label>Y<input value="0°"></label><label>Z<input value="0°"></label></div>
              <div class="fgroup free"><label>Mode<span class="sel-wrap"><select><option>XYZ Euler</option></select><svg class="ch"><use href="#chev"/></svg></span></label></div>
              <div class="fgroup"><label>Scale X<input value="1.000"></label><label>Y<input value="1.000"></label><label>Z<input value="1.000"></label></div>
            </div>
            <h3><svg class="ch big side"><use href="#chev"/></svg>Delta Transform</h3>
          </div>
          <h2 class="panel"><svg class="ch big side"><use href="#chev"/></svg>Relations<svg class="grip"><use href="#grip"/></svg></h2>
          <h2 class="panel"><svg class="ch big side"><use href="#chev"/></svg>Collections<svg class="grip"><use href="#grip"/></svg></h2>
          <h2 class="panel"><svg class="ch big side"><use href="#chev"/></svg>Instancing<svg class="grip"><use href="#grip"/></svg></h2>
          <h2 class="panel"><svg class="ch big side"><use href="#chev"/></svg>Motion Paths<svg class="grip"><use href="#grip"/></svg></h2>
          <h2 class="panel"><svg class="ch big side"><use href="#chev"/></svg>Visibility<svg class="grip"><use href="#grip"/></svg></h2>
          <h2 class="panel"><svg class="ch big side"><use href="#chev"/></svg>Viewport Display<svg class="grip"><use href="#grip"/></svg></h2>
          <h2 class="panel"><svg class="ch big side"><use href="#chev"/></svg>Line Art<svg class="grip"><use href="#grip"/></svg></h2>
          <h2 class="panel"><svg class="ch big side"><use href="#chev"/></svg>Custom Properties<svg class="grip"><use href="#grip"/></svg></h2>
        </div>
      </div>
    </section>
  </div>
</main>

<footer class="status">
  <span><svg><use href="#mouseL"/></svg>Select</span>
  <span><svg><use href="#mouseM"/></svg>Rotate View</span>
  <span><svg><use href="#mouseR"/></svg>Object Context Menu</span>
  <span class="version">3.3.0</span>
</footer>

<svg class="callout" aria-hidden="true">
  <rect x="212" y="267" width="301" height="31" fill="none" stroke="#ed1c24" stroke-width="2"/>
  <path d="M857 133 543 271 542 266 530 279 547 279 545 275 858 135z" fill="#ed1c24" stroke="#ed1c24"/>
</svg>
<script src="scene.js"></script>
</body>
</html>
```
FILE: styles.css
```css
* { box-sizing: border-box; }
body {
  margin: 0;
  height: 100vh;
  display: flex;
  flex-direction: column;
  overflow: hidden;
  background: #161616;
  color: #e0e0e0;
  font: 11px/14px "DejaVu Sans Condensed", "DejaVu Sans", sans-serif;
  text-shadow: 0 1px 1px rgba(0, 0, 0, .5);
}
button, input, select {
  font: inherit;
  color: inherit;
  text-shadow: inherit;
  background: none;
  border: 0;
  padding: 0;
  margin: 0;
  min-width: 0;
  outline: 0;
}
select { appearance: none; }
ul { list-style: none; margin: 0; padding: 0; }
svg { flex: none; display: block; }
.sprite { position: absolute; width: 0; height: 0; }
.ic { width: 15px; height: 15px; }
.ch { width: 8px; height: 8px; }
.faint { opacity: .3; }
.grow { flex: 1; }

/* Top bar */
.topbar {
  height: 26px;
  flex: none;
  display: flex;
  align-items: flex-start;
  background: #1d1d1d;
  padding: 3px 9px 0 10px;
}
.logo { width: 16px; height: 16px; margin: 2px 2px 0 0; color: #ccc; }
.menubar { display: flex; }
.menu-root { position: relative; }
.menu-btn { height: 20px; padding: 1px 7px 0; display: block; margin-right: 1px; }
.menu-btn.open {
  width: 33px;
  background: #38588d;
  border: 1px solid #4772b3;
  border-bottom: 0;
  border-radius: 4px 4px 0 0;
  color: #fff;
  padding-top: 0;
}
.tabs { display: flex; flex: 1; margin-left: 16px; padding-top: 3px; }
.tab { height: 20px; padding: 2px 10px 0; color: #989898; border-radius: 4px 4px 0 0; white-space: nowrap; }
.tab.on { background: #303030; color: #fff; }
.tab.add { padding: 0 6px; }
.tab.add svg { width: 10px; height: 10px; }
.datablock {
  display: flex;
  height: 20px;
  background: #1d1d1d;
  border: 1px solid #3d3d3d;
  border-radius: 4px;
  overflow: hidden;
  margin-left: 5px;
}
.name { width: 98px; padding-left: 6px; border-left: 1px solid #3d3d3d; }
.name.wide { width: 119px; }

/* Controls */
.cell {
  display: flex;
  align-items: center;
  justify-content: center;
  width: 20px;
  background: #282828;
}
.cell.dd { width: 31px; gap: 1px; }
.cell.bare { background: none; }
.cell.dim { color: #6a6a6a; }
.lit { background: #545454; }
.soft { color: #b0b0b0; }
.blue { background: #4772b3; color: #fff; }
.box {
  height: 20px;
  display: flex;
  align-items: center;
  background: #282828;
  border: 1px solid #3d3d3d;
  border-radius: 4px;
}
.box.dd { width: 32px; justify-content: center; gap: 2px; }
.box.lit { background: #545454; }
.box.square { width: 20px; justify-content: center; }
.group { overflow: hidden; }
.group .cell { height: 18px; }
.plain { padding: 2px 8px 0; height: 20px; }

/* Layout */
.workspace {
  flex: 1;
  min-height: 0;
  display: grid;
  grid-template-columns: minmax(0, 1fr) 331px;
  gap: 3px;
  padding: 1px;
}
.left, .right { display: flex; flex-direction: column; gap: 3px; min-height: 0; }
.editor { border-radius: 6px; overflow: hidden; background: #303030; }
.bar { height: 26px; flex: none; display: flex; padding: 2px 8px; background: #303030; }
.bar-side { flex: 1; display: flex; }
.bar-mid { display: flex; gap: 5px; margin-right: 20px; }
.end { justify-content: flex-end; gap: 6px; }

/* 3D viewport */
.viewport { flex: 1; display: flex; flex-direction: column; min-height: 0; }
.mode { width: 110px; margin: 0 4px 0 5px; padding-left: 4px; }
.orient { width: 80px; padding: 0 6px 0 4px; }
.orient select { flex: 1; padding: 1px 0 0 6px; }
.viewport .group .cell { width: 19px; }
.viewport .bar-mid .group .dd { width: 31px; }
.viewport .xray { width: 19px; justify-content: center; background: #545454; color: #b4b4b4; }
.shading .cell:last-child { width: 18px; }
.stage {
  flex: 1;
  position: relative;
  min-height: 0;
  background: radial-gradient(ellipse at center, #3d3d3d 0, #363636 50%, #303030 100%);
}
.scene { position: absolute; inset: 0; width: 100%; height: 100%; }
.minor, .major, .axis-x, .axis-y, .outline, .ghost, .drop { fill: none; }
.minor { stroke: #484848; stroke-width: 1.2px; }
.major { stroke: #535353; stroke-width: 1.4px; }
.axis-x { stroke: #a03545; stroke-width: 1.7px; }
.axis-y { stroke: #5e8420; stroke-width: 1.7px; }
.outline { stroke: #f19b2c; stroke-width: 2px; stroke-linejoin: round; }
.ghost { stroke: rgba(60, 60, 60, .25); }
.drop { stroke: #222; opacity: .7; }
.tool-strip {
  position: relative;
  height: 25px;
  display: flex;
  justify-content: flex-end;
  padding: 3px 6px 2px;
  background: rgba(48, 48, 48, .7);
}
.options { width: 63px; justify-content: space-between; padding: 1px 5px 0 7px; }
.toolbar { position: absolute; left: 8px; top: 33px; display: flex; flex-direction: column; gap: 7px; }
.tg { border-radius: 4px; overflow: hidden; box-shadow: 0 0 0 1px #3d3d3d; }
.tg button { display: block; width: 40px; height: 34px; padding-left: 6px; background: #282828; border-bottom: 1px solid #3d3d3d; }
.tg .on { background: #4772b3; }
.tg svg { width: 24px; height: 24px; }
.fold { position: absolute; right: 0; top: 37px; width: 6px; height: 18px; }
.navigate { position: absolute; top: 35px; right: 10px; width: 84px; display: flex; flex-direction: column; align-items: flex-end; gap: 4px; }
.ball { width: 84px; height: 84px; }
.axis-label { font-weight: 700; font-size: 11px; text-anchor: middle; fill: #1c1c1c; text-shadow: none; }
.navigate button { width: 26px; height: 26px; border-radius: 13px; background: rgba(30, 30, 30, .75); display: flex; align-items: center; justify-content: center; }
.navigate .ball { margin: 0 -2px -7px 0; }

/* Timeline */
.timeline { height: 73px; flex: none; display: flex; flex-direction: column; }
.timeline .bar-side .text { margin-left: 5px; }
.timeline .plain { padding: 2px 0 0 8px; margin-right: 7px; }
.text .cell { padding-top: 1px; }
.playback.cell { width: 69px; gap: 6px; border-right: 1px solid #3d3d3d; }
.keying.cell { width: 59px; gap: 6px; }
.flip { transform: scaleX(-1); }
.player .cell { border-right: 1px solid #3d3d3d; }
.player .cell:last-child { border: 0; }
.frame { width: 74px; height: 20px; background: #545454; border-radius: 4px; text-align: center; padding-top: 2px; }
.range .num { width: 87px; padding: 1px 12px 0 15px; justify-content: space-between; border-left: 1px solid #3d3d3d; }
.range .num:last-child { width: 82px; }
.range .num input { width: 30px; text-align: right; }
.ruler {
  flex: 1;
  position: relative;
  background: linear-gradient(#1c1c1c 23px, transparent 23px), linear-gradient(90deg, #222 58px, #303030 58px, #303030 calc(100% - 59px), #222 calc(100% - 59px));
}
.frames { display: flex; height: 100%; padding: 0 29px 0 82px; }
.frames span {
  flex: 1;
  text-align: center;
  padding-top: 5px;
  color: #a0a0a0;
  background:
    linear-gradient(90deg, #282828 1px, transparent 1px) 0 23px no-repeat,
    linear-gradient(90deg, transparent calc(50% - 1px), #1a1a1a calc(50% - 1px), #1a1a1a 50%, transparent 50%) 0 23px no-repeat;
}
.playhead {
  position: absolute;
  left: 45px;
  top: 3px;
  width: 25px;
  height: 18px;
  line-height: 16px;
  text-align: center;
  color: #fff;
  background: #4772b3;
  border: 1px solid #5680c2;
  border-radius: 4px;
}
.playhead::after { content: ""; position: absolute; left: 11px; top: 16px; width: 2px; height: 28px; background: #4772b3; }
.edge { position: absolute; top: 12px; width: 6px; height: 18px; }
.edge.l { left: 0; }
.edge.r { right: 0; }
.scroll { position: absolute; left: 8px; right: 9px; bottom: 3px; height: 8px; border-radius: 4px; background: #545454; }
.scroll::before, .scroll::after { content: ""; position: absolute; top: 1px; width: 6px; height: 6px; border-radius: 3px; background: #222; border: 1px solid #666; }
.scroll::before { left: 0; }
.scroll::after { right: 0; }

/* Outliner */
.outliner { height: 310px; flex: none; background: #282828; display: flex; flex-direction: column; }
.outliner .bar { background: #282828; gap: 5px; padding-right: 6px; }
.right .search { width: 111px; background: #1d1d1d; padding-left: 4px; }
.search input { flex: 1; }
.outliner .search { margin: 0 auto 0 17px; }
.rows { flex: 1; background: repeating-linear-gradient(#282828 0 20px, #2b2b2b 20px 40px); color: #c4c4c4; }
.rows li { height: 20px; display: flex; align-items: center; padding: 1px 12px 0 0; }
.rows .ic { color: #d8d8d8; }
.rows .grow ~ .ic { width: 14px; height: 14px; margin-left: 6px; }
.rows li > span:not(.halo) { padding-top: 1px; }
.rows .d0 { padding-left: 22px; }
.d0 span { margin-left: 7px; }
.rows .d1 { padding-left: 25px; }
.rows .d2 { padding-left: 47px; position: relative; }
.d2::before { content: ""; position: absolute; left: 29px; top: 0; bottom: 0; border-left: 1px solid #555; }
.d2 > .ic:nth-child(2) { margin: 0 0 0 9px; }
.d2 > span { margin-left: 7px; }
.halo { width: 20px; height: 18px; border-radius: 4px; background: #545454; border: 1px solid #666; display: flex; align-items: center; justify-content: center; }
.d1 > .halo { margin: 0 3px 0 8px; }
.d2 > .halo { margin: 0 -3px 0 7px; background: #5d6d8e; border-color: #71809e; }
.d2 > .cam { margin-left: 20px; background: #545454; border-color: #666; }
.data { margin-left: 22px; }
.rows .orange { color: #c9824d; }
.rows .teal { color: #14b08a; }
.rows .sel { background: #334d80; }
.sel > span:nth-of-type(2) { color: #f0a23c; }
.sub { width: 0; height: 0; border: 4px solid transparent; border-left: 6px solid #b0b0b0; border-right: 0; }
.down { width: 0; height: 0; border: 4px solid transparent; border-top: 7px solid #b0b0b0; border-bottom: 0; }
.rows input[type=checkbox] { appearance: none; width: 11px; height: 11px; background: #e6e6e6; border-radius: 1px; margin-right: 2px; display: flex; align-items: center; justify-content: center; }
.rows input:checked::after { content: ""; width: 3px; height: 6px; border: solid #222; border-width: 0 2px 2px 0; transform: rotate(40deg); margin-top: -2px; }

/* Properties */
.props { flex: 1; display: flex; flex-direction: column; min-height: 0; }
.props .bar { padding-right: 6px; }
.props .search { margin: 0 auto 0 70px; }
.props-body { flex: 1; display: flex; min-height: 0; }
.ptabs { width: 28px; background: #1d1d1d; display: flex; flex-direction: column; padding: 8px 0 0 2px; }
.ptabs div { display: flex; flex-direction: column; gap: 2px; border-bottom: 1px solid #181818; padding-bottom: 3px; margin-bottom: 6px; }
.ptabs button { height: 26px; border-radius: 4px 0 0 4px; display: flex; align-items: center; justify-content: center; color: #a8a8a8; }
.ptabs .ic { width: 14px; height: 14px; }
.ptabs .on { background: #303030; color: #e19658; }
.ptabs .red { color: #b2595f; }
.ptabs .bluei { color: #5f82cf; }
.ptabs .teal { color: #14b08a; }
.ptabs .white { color: #ddd; }
.pmain { flex: 1; padding: 8px 7px 0 8px; display: flex; flex-direction: column; gap: 2px; }
.crumb { display: flex; align-items: center; height: 19px; padding: 0 2px 0 3px; }
.crumb span { margin-left: 8px; }
.crumb .pin { color: #999; }
.idblock { display: flex; height: 20px; margin: 14px 0 8px; border: 1px solid #3d3d3d; border-radius: 4px; overflow: hidden; background: #1d1d1d; }
.idblock input { flex: 1; padding-left: 7px; border-left: 1px solid #3d3d3d; }
.panel { background: #3d3d3d; border-radius: 4px; }
h2, h3 { font: inherit; margin: 0; display: flex; align-items: center; height: 25px; padding: 1px 7px 0 8px; }
.big { width: 10px; height: 10px; margin-right: 4px; color: #aaa; }
.side { transform: rotate(-90deg); }
.grip { width: 11px; height: 5px; margin-left: auto; color: #999; }
.fields { padding: 9px 0 10px; display: flex; flex-direction: column; gap: 7px; }
.fgroup { display: flex; flex-direction: column; gap: 2px; }
.fgroup label { display: grid; grid-template-columns: 104px 135px 18px 15px; align-items: center; height: 18px; text-align: right; }
.fgroup input { width: 125px; height: 18px; background: #545454; text-align: center; justify-self: end; }
.fgroup .ic { width: 14px; height: 14px; color: #999; justify-self: end; }
.dot { width: 4px; height: 4px; border-radius: 2px; background: #d8d8d8; justify-self: end; }
.sel-wrap { width: 125px; height: 18px; justify-self: end; display: flex; align-items: center; background: #282828; border-radius: 4px; padding: 0 2px 0 7px; }
.sel-wrap select { flex: 1; }
h3 { padding-left: 22px; height: 24px; }

/* Status bar */
.status { height: 19px; flex: none; display: flex; align-items: center; background: #1d1d1d; color: #8c8c8c; padding: 0 8px 0 12px; }
.status span { display: flex; align-items: center; gap: 11px; width: 211px; white-space: nowrap; }
.status svg { width: 11px; height: 16px; }
.status .version { width: auto; margin-left: auto; }

/* Menus */
.popup {
  position: absolute;
  z-index: 5;
  background: #181818;
  border: 1px solid #242424;
  border-radius: 0 0 4px 4px;
  box-shadow: 0 2px 4px rgba(0, 0, 0, .4);
}
.file-menu { left: 0; top: 20px; width: 187px; padding: 2px 2px 4px; }
.popup li { height: 20px; display: flex; align-items: center; position: relative; padding: 2px 4px 0 29px; white-space: nowrap; }
.popup li > .ic { position: absolute; left: 7px; top: 3px; }
.popup li > .sub { margin-left: auto; border-left-color: #a0a0a0; }
.popup kbd { margin-left: auto; font: inherit; color: #6c6c6c; margin-right: 6px; }
.popup kbd + .sub { margin-left: -6px; }
.popup .off { color: #6c6c6c; }
.popup .sep { height: 9px; padding: 0; }
.popup .sep::after { content: ""; flex: 1; height: 1px; background: #303030; margin: 0 -2px; }
.popup .hot { color: #fff; background: linear-gradient(#4772b3, #4772b3) 0 1px / 100% 18px no-repeat; border-radius: 4px; }
.popup u { text-underline-offset: 4px; text-decoration-thickness: 1px; text-decoration-color: #aaa; text-decoration-skip-ink: none; }
.file-menu .import-menu { left: 184px; top: -5px; width: 295px; padding: 3px; color: #e0e0e0; border-radius: 4px; }
.popup .import-menu li { padding-left: 28px; }

.callout { position: absolute; left: 0; top: 0; width: 100%; height: 100%; z-index: 9; pointer-events: none; }
```
FILE: scene.js
```js
// View rotation rows and distance of the default perspective view.
const R = [[0.41, 0.9121, -0.0133], [-0.4017, 0.1936, 0.8951], [0.8188, -0.3612, 0.4458]];
const DIST = 17.987;
const svg = document.getElementById('scene3d');
const set = (id, d) => document.getElementById(id).setAttribute('d', d);

function draw() {
  const w = svg.clientWidth, h = svg.clientHeight;
  const F = w * 50 / 72;
  svg.setAttribute('viewBox', `${-w / 2} ${-h / 2} ${w} ${h}`);
  const cam = p => R.map(r => r[0] * p[0] + r[1] * p[1] + r[2] * p[2]);
  const proj = p => {
    const c = cam(p), s = F / (DIST - c[2]);
    return [(c[0] * s).toFixed(1), (-c[1] * s).toFixed(1)];
  };
  // Segment between two world points, cut at the near plane.
  const seg = (a, b) => {
    const lim = DIST - 0.5;
    const za = cam(a)[2], zb = cam(b)[2];
    if (za > lim && zb > lim) return '';
    const cut = (p, q, zp, zq) => {
      if (zp <= lim) return p;
      const t = (lim - zp) / (zq - zp);
      return p.map((v, i) => v + (q[i] - v) * t);
    };
    return `M${proj(cut(a, b, za, zb))}L${proj(cut(b, a, zb, za))}`;
  };
  const L = 160;
  let minor = '', major = '';
  for (let i = -120; i <= 120; i++) {
    if (i === 0) continue;
    const d = seg([i, -L, 0], [i, L, 0]) + seg([-L, i, 0], [L, i, 0]);
    if (i % 10) minor += d; else major += d;
  }
  set('minor', minor);
  set('major', major);
  set('axisx', seg([-L, 0, 0], [L, 0, 0]));
  set('axisy', seg([0, -L, 0], [0, L, 0]));
  set('frontx', seg([1, 0, 0], [4, 0, 0]));
  set('fronty', seg([0, -4, 0], [0, -1, 0]));
  const poly = pts => 'M' + pts.map(proj).join('L') + 'Z';
  set('ftop', poly([[1, 1, 1], [-1, 1, 1], [-1, -1, 1], [1, -1, 1]]));
  set('fleft', poly([[1, -1, 1], [-1, -1, 1], [-1, -1, -1], [1, -1, -1]]));
  set('fright', poly([[1, -1, 1], [1, 1, 1], [1, 1, -1], [1, -1, -1]]));
  const outline = poly([[1, 1, 1], [-1, 1, 1], [-1, -1, 1], [-1, -1, -1], [1, -1, -1], [1, 1, -1]]);
  set('sil', outline);
  set('silclip', outline);
  set('front', seg([-1, -1, 0], [5, -1, 0]) + seg([1, -4, 0], [1, -1, 0]) + seg([2, -4, 0], [2, 4, 0]));
  const lamp = [4.076, 1.005, 5.904];
  set('drop', seg(lamp, [4.076, 1.005, 0]));
  document.getElementById('lamp').setAttribute('transform', `translate(${proj(lamp)})`);
}
draw();
window.addEventListener('resize', draw);

const frames = document.getElementById('frames');
for (let f = 10; f <= 250; f += 10) {
  const s = document.createElement('span');
  s.textContent = f;
  frames.append(s);
}

// Lock toggle and keyframe dot after every transform field.
document.querySelectorAll('#fields label').forEach(label => {
  const free = label.parentElement.classList.contains('free');
  label.insertAdjacentHTML('beforeend',
    (free ? '<i></i>' : '<svg class="ic"><use href="#unlock"/></svg>') + '<i class="dot"></i>');
});
```
